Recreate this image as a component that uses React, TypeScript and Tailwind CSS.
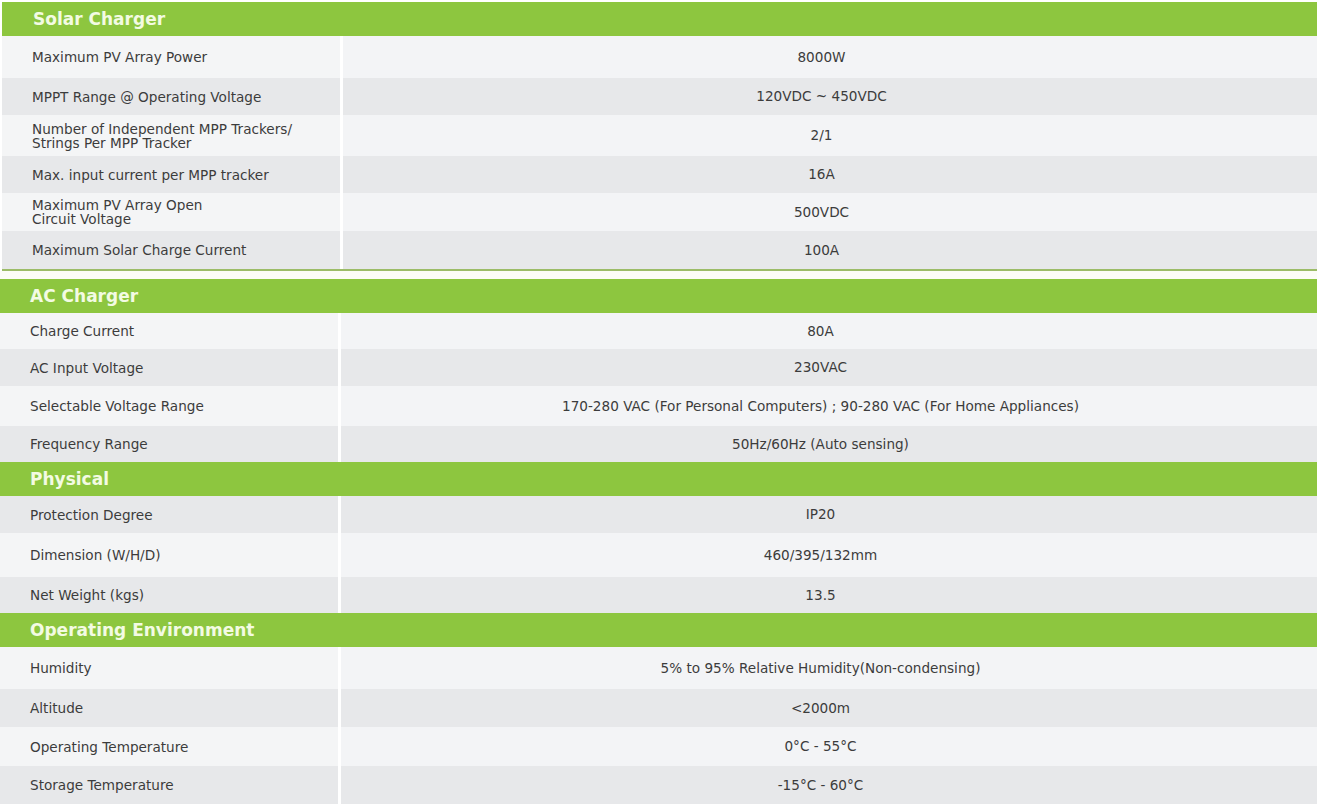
import React from "react";

type Row = { label: React.ReactNode; value: string; h: number; gray: boolean };

const Header = ({ title, inset }: { title: string; inset?: boolean }) => (
  <div
    className={`flex h-[34px] items-center bg-[#8dc63f] pt-[1px] text-[17px] font-bold text-[#f3fbe3] ${
      inset ? "pl-[31px]" : "pl-[30px]"
    }`}
  >
    {title}
  </div>
);

const Rows = ({ rows }: { rows: Row[] }) => (
  <div className="flex flex-col">
    {rows.map((r, i) => (
      <div key={i} className="flex" style={{ height: r.h }}>
        <div
          className={`flex w-[338px] items-center pl-[30px] leading-[14px] ${
            r.gray ? "bg-[#e7e8ea]" : "bg-[#f4f5f6]"
          }`}
        >
          <div>{r.label}</div>
        </div>
        <div className="w-[3px] bg-white" />
        <div
          className={`flex flex-1 items-center justify-center pr-[17px] ${
            r.gray ? "bg-[#e7e8ea]" : "bg-[#f3f4f6]"
          }`}
        >
          {r.value}
        </div>
      </div>
    ))}
  </div>
);

export default function App() {
  return (
    <div
      className="h-[808px] w-[1326px] overflow-hidden bg-white pt-[2px] text-[13.6px] text-[#3c3c3c]"
      style={{ fontFamily: '"DejaVu Sans", "Liberation Sans", sans-serif' }}
    >
      <div className="w-[1317px]">
        <div className="ml-[2px]">
          <Header title="Solar Charger" inset />
          <Rows
            rows={[
              { label: "Maximum PV Array Power", value: "8000W", h: 42, gray: false },
              { label: "MPPT Range @ Operating Voltage", value: "120VDC ~ 450VDC", h: 37, gray: true },
              {
                label: (
                  <>
                    Number of Independent MPP Trackers/
                    <br />
                    Strings Per MPP Tracker
                  </>
                ),
                value: "2/1",
                h: 41,
                gray: false,
              },
              { label: "Max. input current per MPP tracker", value: "16A", h: 37, gray: true },
              {
                label: (
                  <>
                    Maximum PV Array Open
                    <br />
                    Circuit Voltage
                  </>
                ),
                value: "500VDC",
                h: 38,
                gray: false,
              },
              { label: "Maximum Solar Charge Current", value: "100A", h: 38, gray: true },
            ]}
          />
          <div className="h-[2px] bg-[#9cbc68]" />
        </div>
        <div className="h-[8px] bg-[#fcfdf7]" />
        <Header title="AC Charger" />
        <Rows
          rows={[
            { label: "Charge Current", value: "80A", h: 36, gray: false },
            { label: "AC Input Voltage", value: "230VAC", h: 37, gray: true },
            {
              label: "Selectable Voltage Range",
              value: "170-280 VAC (For Personal Computers) ; 90-280 VAC (For Home Appliances)",
              h: 40,
              gray: false,
            },
            { label: "Frequency Range", value: "50Hz/60Hz (Auto sensing)", h: 36, gray: true },
          ]}
        />
        <Header title="Physical" />
        <Rows
          rows={[
            { label: "Protection Degree", value: "IP20", h: 37, gray: true },
            { label: "Dimension (W/H/D)", value: "460/395/132mm", h: 44, gray: false },
            { label: "Net Weight (kgs)", value: "13.5", h: 36, gray: true },
          ]}
        />
        <Header title="Operating Environment" />
        <Rows
          rows={[
            { label: "Humidity", value: "5% to 95% Relative Humidity(Non-condensing)", h: 42, gray: false },
            { label: "Altitude", value: "<2000m", h: 38, gray: true },
            { label: "Operating Temperature", value: "0°C - 55°C", h: 39, gray: false },
            { label: "Storage Temperature", value: "-15°C  - 60°C", h: 38, gray: true },
          ]}
        />
      </div>
    </div>
  );
}
